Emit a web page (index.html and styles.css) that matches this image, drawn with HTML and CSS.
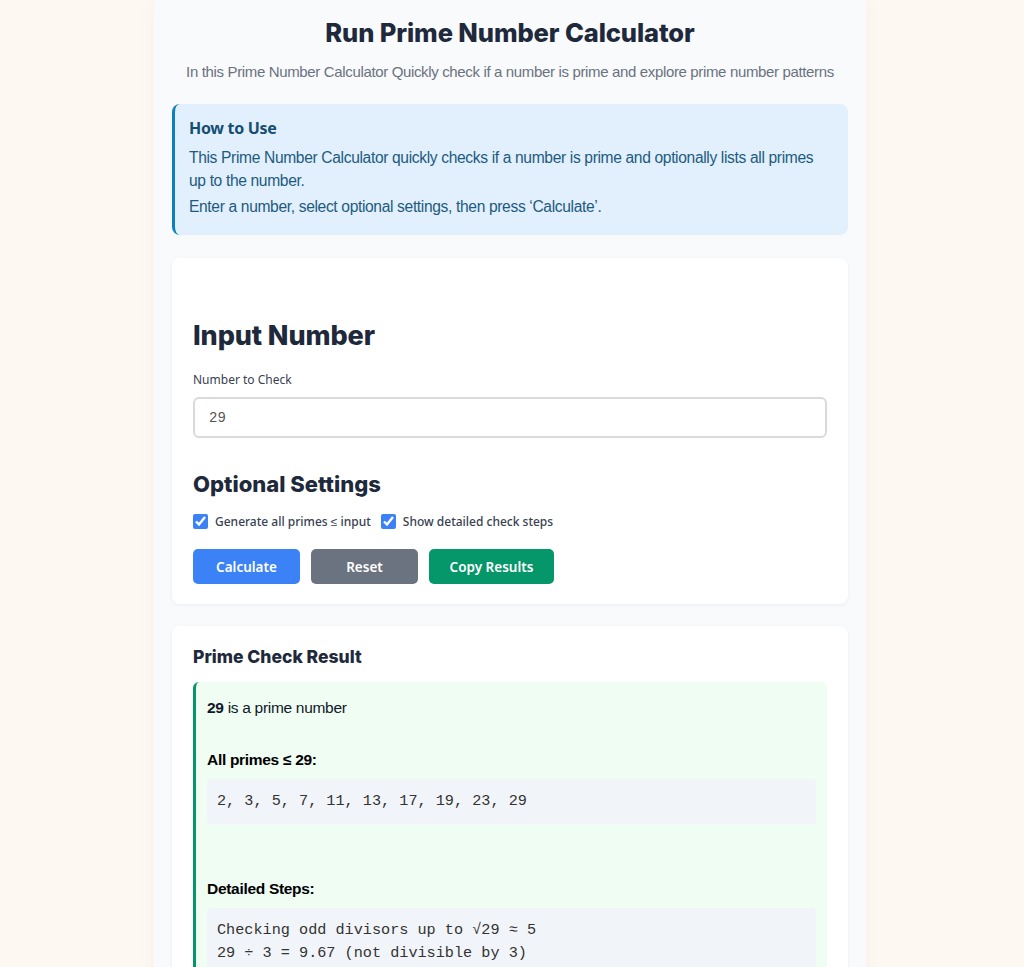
FILE: index.html
```html
<!DOCTYPE html>
<html lang="en">
<head>
<meta charset="utf-8">
<title>Run Prime Number Calculator</title>
<link rel="stylesheet" href="styles.css">
</head>
<body>
<main class="page">
  <header class="page-head">
    <h1 class="page-title">Run Prime Number Calculator</h1>
    <p class="page-sub">In this Prime Number Calculator Quickly check if a number is prime and explore prime number patterns</p>
  </header>

  <section class="howto">
    <h3 class="howto-title">How to Use</h3>
    <p>This Prime Number Calculator quickly checks if a number is prime and optionally lists all primes up to the number.</p>
    <p>Enter a number, select optional settings, then press ‘Calculate’.</p>
  </section>

  <section class="card card-input">
    <h2 class="card-title">Input Number</h2>
    <label class="field-label" for="num">Number to Check</label>
    <input class="field" id="num" type="text" value="29">

    <h3 class="sub-title">Optional Settings</h3>
    <div class="checks">
      <label class="check"><input type="checkbox" checked> Generate all primes ≤ input</label>
      <label class="check"><input type="checkbox" checked> Show detailed check steps</label>
    </div>
    <div class="actions">
      <button class="btn btn-blue">Calculate</button>
      <button class="btn btn-gray">Reset</button>
      <button class="btn btn-green">Copy Results</button>
    </div>
  </section>

  <section class="card card-result">
    <h3 class="result-title">Prime Check Result</h3>
    <div class="result">
      <p class="verdict"><strong>29</strong> is a prime number</p>
      <h4 class="result-head">All primes ≤ 29:</h4>
      <pre class="code">2, 3, 5, 7, 11, 13, 17, 19, 23, 29</pre>
      <h4 class="result-head steps-head">Detailed Steps:</h4>
      <pre class="code">Checking odd divisors up to √29 ≈ 5
29 ÷ 3 = 9.67 (not divisible by 3)
29 ÷ 5 = 5.80 (not divisible by 5)</pre>
    </div>
  </section>
</main>
</body>
</html>
```

FILE: styles.css
```css
* { box-sizing: border-box; }

html, body {
  margin: 0;
  background: #fdf8f1;
  font-family: "Liberation Sans", Arial, sans-serif;
  color: #1f2937;
}

.page {
  width: 712px;
  margin: 0 0 0 calc(50% - 358px);
  padding: 0 18px 40px;
  background: #f8fafc;
  box-shadow: 0 0 18px rgba(0, 0, 0, 0.04);
  min-height: 967px;
}

.page-head { text-align: center; padding-top: 17px; }

.page-title {
  margin: 0;
  font-family: Inter, "Noto Sans", sans-serif;
  font-size: 25.5px;
  line-height: 32px;
  font-weight: 800;
  color: #1e293b;
  letter-spacing: -0.1px;
}

.page-sub {
  margin: 13px 0 0;
  font-size: 15px;
  line-height: 20px;
  color: #6b7280;
  letter-spacing: -0.35px;
}

.howto {
  margin-top: 22px;
  background: #e1f0fc;
  border-left: 3px solid #0e7fc0;
  border-radius: 8px;
  padding: 14px 20px 14px 14px;
  color: #1e5a80;
}

.howto-title {
  margin: 0 0 8px;
  font-family: "Noto Sans", sans-serif;
  font-size: 16px;
  line-height: 20px;
  font-weight: 700;
  color: #164e72;
  letter-spacing: -0.3px;
}

.howto p {
  margin: 0 0 3px;
  font-size: 15.6px;
  line-height: 23px;
  letter-spacing: -0.35px;
}

.card {
  margin-top: 23px;
  background: #ffffff;
  border-radius: 8px;
  box-shadow: 0 1px 4px rgba(15, 23, 42, 0.06);
  padding: 20px 21px;
}

.card-title {
  margin: 42px 0 20px;
  font-family: Inter, "Noto Sans", sans-serif;
  font-size: 27px;
  line-height: 32px;
  font-weight: 800;
  color: #1e293b;
  letter-spacing: -0.1px;
}

.field-label {
  display: block;
  font-family: "Noto Sans", sans-serif;
  font-size: 12px;
  line-height: 16px;
  color: #374151;
  margin-bottom: 9px;
}

.field {
  display: block;
  width: 100%;
  height: 41px;
  border: 2px solid #d9dadc;
  border-radius: 6px;
  padding: 0 14px;
  font-family: "Liberation Mono", monospace;
  font-size: 14px;
  color: #555;
  background: #fff;
}

.sub-title {
  margin: 32px 0 15px;
  font-family: Inter, "Noto Sans", sans-serif;
  font-size: 22px;
  line-height: 28px;
  font-weight: 800;
  color: #1e293b;
}

.checks { display: flex; gap: 10px; align-items: center; }

.check {
  display: flex;
  align-items: center;
  gap: 7px;
  font-family: "Noto Sans", sans-serif;
  font-size: 12px;
  font-weight: 500;
  color: #374151;
}

.check input {
  margin: 0;
  width: 15px;
  height: 15px;
  accent-color: #3b82f6;
}

.actions { display: flex; gap: 11px; margin-top: 19px; }

.btn {
  height: 35px;
  border: 0;
  border-radius: 5px;
  color: #fff;
  font-family: "Noto Sans", sans-serif;
  font-size: 13.5px;
  font-weight: 600;
  padding: 0;
  white-space: nowrap;
}
.btn-blue { background: #3b82f6; width: 107px; }
.btn-gray { background: #6b7280; width: 107px; }
.btn-green { background: #059669; width: 125px; }

.card-result { margin-top: 22px; padding-top: 19px; }

.result-title {
  margin: 0 0 13px;
  font-family: Inter, "Noto Sans", sans-serif;
  font-size: 17.5px;
  line-height: 24px;
  font-weight: 800;
  color: #1e293b;
}

.result {
  background: #effdf3;
  border-left: 3px solid #059669;
  border-radius: 6px;
  padding: 16px 11px 14px 11px;
}

.verdict {
  margin: 0;
  font-size: 15.5px;
  line-height: 20px;
  color: #111827;
  letter-spacing: -0.3px;
}

.result-head {
  margin: 32px 0 9px;
  font-size: 15.5px;
  line-height: 20px;
  font-weight: 700;
  color: #000;
  letter-spacing: -0.3px;
}

.steps-head { margin-top: 55px; }

.code {
  margin: 0;
  background: #f1f5f9;
  border-radius: 4px;
  padding: 11px 10px;
  font-family: "Liberation Mono", monospace;
  font-size: 15.2px;
  line-height: 23px;
  color: #333;
  white-space: pre-wrap;
}
```
